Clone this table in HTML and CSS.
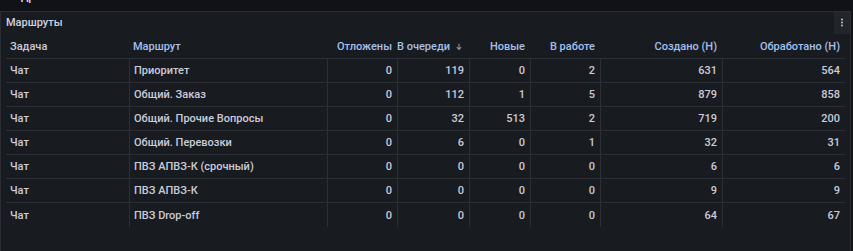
FILE: index.html
```html
<!DOCTYPE html>
<html lang="ru">
<head>
<meta charset="utf-8">
<title>Маршруты</title>
<link rel="stylesheet" href="styles.css">
</head>
<body>
<div class="row-title"><span>Подробно</span></div>
<section class="panel">
  <header class="panel-header">
    <h2 class="panel-title">Маршруты</h2>
    <button class="menu-btn" aria-label="Меню">
      <svg width="4" height="10" viewBox="0 0 4 10"><circle cx="2" cy="1.5" r="1.1"/><circle cx="2" cy="4.5" r="1.1"/><circle cx="2" cy="7.5" r="1.1"/></svg>
    </button>
  </header>
  <div class="table-wrap">
    <div class="grid">
      <div class="th">Задача</div>
      <div class="th link">Маршрут</div>
      <div class="th link num">Отложены</div>
      <div class="th link num">В очереди<svg class="sort" width="8" height="8" viewBox="0 0 8 8"><path d="M4 0.8v5.4M1.8 4.2L4 6.4l2.2-2.2" fill="none" stroke="currentColor" stroke-width="1.1"/></svg></div>
      <div class="th link num">Новые</div>
      <div class="th link num">В работе</div>
      <div class="th link num">Создано (Н)</div>
      <div class="th link num">Обработано (Н)</div>

      <div class="td first">Чат</div><div class="td">Приоритет</div><div class="td num">0</div><div class="td num">119</div><div class="td num">0</div><div class="td num">2</div><div class="td num">631</div><div class="td num">564</div>
      <div class="td first">Чат</div><div class="td">Общий. Заказ</div><div class="td num">0</div><div class="td num">112</div><div class="td num">1</div><div class="td num">5</div><div class="td num">879</div><div class="td num">858</div>
      <div class="td first">Чат</div><div class="td">Общий. Прочие Вопросы</div><div class="td num">0</div><div class="td num">32</div><div class="td num">513</div><div class="td num">2</div><div class="td num">719</div><div class="td num">200</div>
      <div class="td first">Чат</div><div class="td">Общий. Перевозки</div><div class="td num">0</div><div class="td num">6</div><div class="td num">0</div><div class="td num">1</div><div class="td num">32</div><div class="td num">31</div>
      <div class="td first">Чат</div><div class="td">ПВЗ АПВЗ-К (срочный)</div><div class="td num">0</div><div class="td num">0</div><div class="td num">0</div><div class="td num">0</div><div class="td num">6</div><div class="td num">6</div>
      <div class="td first">Чат</div><div class="td">ПВЗ АПВЗ-К</div><div class="td num">0</div><div class="td num">0</div><div class="td num">0</div><div class="td num">0</div><div class="td num">9</div><div class="td num">9</div>
      <div class="td first last">Чат</div><div class="td last">ПВЗ Drop-off</div><div class="td num last">0</div><div class="td num last">0</div><div class="td num last">0</div><div class="td num last">0</div><div class="td num last">64</div><div class="td num last">67</div>
    </div>
  </div>
</section>
</body>
</html>
```
FILE: styles.css
```css
html, body {
  margin: 0;
  padding: 0;
  background: #111217;
  font-family: Roboto, "Noto Sans", sans-serif;
  color: #ccccdc;
  overflow: hidden;
}

.row-title {
  height: 11px;
  overflow: hidden;
  padding-left: 6px;
}

.row-title span {
  display: block;
  font-size: 12px;
  line-height: 12px;
  font-weight: 500;
  color: #d8d9e0;
  margin-top: -10px;
}

.panel {
  margin-right: 2px;
  height: 250px;
  background: #181b1f;
  border: 1px solid #2a2d33;
  box-sizing: border-box;
}

.panel-header {
  display: flex;
  align-items: flex-start;
  justify-content: space-between;
  height: 22px;
}

.panel-title {
  margin: 0;
  padding-left: 5px;
  font-size: 11px;
  font-weight: 500;
  line-height: 22px;
  color: #d0d4e0;
}

.menu-btn {
  width: 16px;
  height: 22px;
  margin: 0;
  padding: 0;
  border: 0;
  background: #22252b;
  display: flex;
  align-items: center;
  justify-content: center;
  fill: #b0b3bd;
}

.table-wrap {
  padding: 1px 5px 0 5px;
}

.grid {
  display: grid;
  grid-template-columns: 123px 198px 70px 72px 61px 70px 122px 123px;
  font-size: 11px;
}

.th, .td {
  height: 24px;
  box-sizing: border-box;
  border-bottom: 1px solid #2c2f35;
  display: flex;
  align-items: center;
  padding: 0 5px 0 4px;
  white-space: nowrap;
  font-weight: 500;
}

.th {
  color: #ccccdc;
}

.th.link {
  color: #a5c0ee;
}

.td {
  border-left: 1px solid #2c2f35;
  color: #ccccdc;
}

.td.first {
  border-left: 0;
}

.td.last {
  border-bottom: 0;
}

.num {
  justify-content: flex-end;
}

.sort {
  margin-left: 5px;
  margin-right: 1px;
  flex: none;
  color: #8e93a0;
}
```
